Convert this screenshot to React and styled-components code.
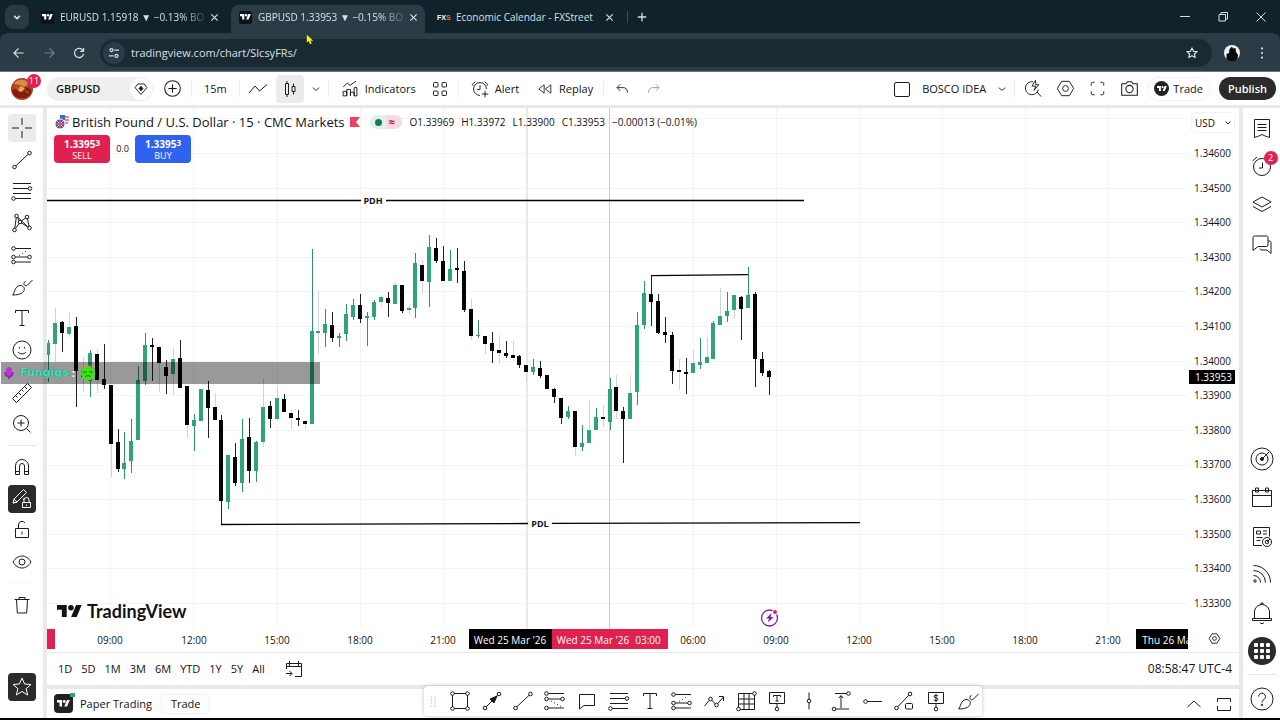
import { useState } from 'react';
import styled, { createGlobalStyle } from 'styled-components';

// [wick top, body top, body bottom, wick bottom, kind]
// g: up, k: down, gf / kf: same bodies with a pale wick
const candles = [
  [340, 343, 355, 382, 'g'], [308, 323, 344, 362, 'gf'], [321, 322, 333, 352, 'k'], [312, 327, 334, 337, 'gf'],
  [317, 326, 371, 407, 'k'], [357, 371, 377, 392, 'kf'], [350, 353, 381, 397, 'g'], [349, 354, 380, 393, 'kf'],
  [344, 379, 385, 389, 'k'], [385, 385, 444, 477, 'kf'], [429, 442, 469, 472, 'k'], [432, 463, 469, 479, 'g'],
  [419, 441, 461, 473, 'g'], [366, 380, 440, 440, 'g'], [333, 345, 381, 385, 'g'], [338, 345, 347, 381, 'k'],
  [346, 347, 363, 392, 'kf'], [360, 367, 376, 394, 'k'], [348, 359, 374, 395, 'gf'], [340, 358, 388, 388, 'k'],
  [386, 386, 425, 438, 'kf'], [414, 420, 426, 451, 'g'], [389, 389, 421, 421, 'g'], [381, 390, 408, 438, 'k'],
  [393, 407, 420, 420, 'kf'], [415, 420, 501, 525, 'k'], [455, 455, 502, 509, 'g'], [443, 457, 483, 486, 'k'],
  [419, 439, 483, 492, 'g'], [418, 437, 471, 483, 'k'], [441, 442, 471, 482, 'g'], [378, 407, 442, 447, 'gf'],
  [401, 406, 419, 428, 'k'], [387, 398, 419, 421, 'gf'], [394, 399, 412, 412, 'k'], [410, 413, 418, 429, 'kf'],
  [410, 418, 420, 426, 'k'], [420, 421, 424, 429, 'kf'], [249, 331, 424, 424, 'g'], [291, 331, 333, 354, 'gf'],
  [309, 324, 333, 347, 'g'], [312, 325, 338, 342, 'k'], [333, 336, 338, 347, 'g'], [304, 314, 334, 341, 'g'],
  [299, 305, 317, 320, 'g'], [294, 305, 319, 323, 'k'], [312, 316, 318, 346, 'g'], [300, 302, 317, 320, 'g'],
  [295, 297, 302, 307, 'gf'], [292, 298, 303, 317, 'k'], [282, 285, 304, 304, 'gf'], [285, 285, 311, 313, 'k'],
  [306, 308, 310, 315, 'gf'], [253, 263, 308, 318, 'g'], [260, 265, 281, 293, 'kf'], [235, 247, 282, 307, 'g'],
  [238, 248, 261, 263, 'k'], [246, 261, 281, 281, 'k'], [250, 269, 281, 281, 'g'], [248, 268, 270, 283, 'k'],
  [261, 271, 310, 312, 'k'], [299, 309, 336, 340, 'kf'], [320, 335, 336, 338, 'g'], [336, 336, 344, 354, 'kf'],
  [332, 343, 351, 363, 'k'], [335, 350, 353, 364, 'kf'], [341, 353, 356, 358, 'k'], [341, 355, 358, 361, 'kf'],
  [355, 356, 365, 368, 'k'], [365, 365, 372, 382, 'kf'], [359, 367, 372, 375, 'g'], [361, 368, 376, 378, 'k'],
  [375, 375, 389, 389, 'k'], [388, 389, 397, 403, 'k'], [398, 398, 418, 424, 'k'], [406, 411, 417, 419, 'g'],
  [411, 411, 447, 456, 'kf'], [425, 443, 447, 451, 'g'], [400, 430, 443, 443, 'gf'], [408, 417, 430, 430, 'g'],
  [405, 417, 419, 427, 'kf'], [378, 389, 422, 430, 'g'], [375, 387, 411, 419, 'kf'], [407, 411, 419, 463, 'k'],
  [375, 393, 419, 419, 'gf'], [312, 325, 392, 405, 'g'], [281, 293, 325, 329, 'g'], [276, 294, 302, 326, 'k'],
  [294, 301, 333, 334, 'k'], [317, 332, 335, 343, 'k'], [332, 335, 371, 384, 'k'], [359, 370, 372, 390, 'kf'],
  [358, 372, 374, 394, 'k'], [350, 363, 373, 373, 'gf'], [338, 362, 365, 369, 'g'], [337, 357, 363, 363, 'gf'],
  [321, 323, 359, 359, 'g'], [288, 316, 325, 325, 'gf'], [292, 311, 316, 322, 'g'], [295, 295, 310, 319, 'gf'],
  [296, 297, 309, 340, 'k'], [267, 295, 308, 308, 'g'], [292, 294, 359, 387, 'k'], [352, 359, 373, 376, 'k'],
  [370, 371, 377, 395, 'k'],
];

const ORIGIN_X = 47;
const ORIGIN_Y = 108;
const STEP = 6.93;

const prices = ['1.34600', '1.34500', '1.34400', '1.34300', '1.34200', '1.34100', '1.34000', '1.33900', '1.33800', '1.33700', '1.33600', '1.33500', '1.33400', '1.33300'];
const hours = [['09:00', 110], ['12:00', 194], ['15:00', 277], ['18:00', 360], ['21:00', 443], ['06:00', 693], ['09:00', 776], ['12:00', 859], ['15:00', 942], ['18:00', 1025], ['21:00', 1108]];
const gridX = [110, 193, 277, 360, 443, 693, 776, 859, 942, 1025, 1108];
const ranges = ['1D', '5D', '1M', '3M', '6M', 'YTD', '1Y', '5Y', 'All'];

const dot = (x, y, r = 1.8) => <circle cx={x} cy={y} r={r} fill="var(--bg, #fff)" />;

const shapes = {
  cross: <path d="M12 2v7M12 15v7M2 12h7M15 12h7" />,
  trend: <><path d="M4.5 19 19.5 5" />{dot(4.5, 19)}{dot(19.5, 5)}</>,
  fib: <><path d="M3 4.5h18M3 9.5h18M3 14.5h18M3 19.5h18" />{dot(20, 9.5)}{dot(3.5, 19.5)}</>,
  pattern: <><path d="M4.5 19 6.5 5 10 11 17 6l2.500 11L10 11zM6.500 5l12.500 12" />{dot(6.5, 5)}{dot(17, 6)}{dot(4.5, 19)}{dot(19.5, 17)}{dot(10, 11)}</>,
  forecast: <><path d="M4 5.500h17M4 14h15M4 19h17" /><path d="M9 12.500 18 7" strokeDasharray="1 2.500" />{dot(3.5, 5.5)}{dot(3.5, 14)}{dot(19.5, 14)}{dot(3.5, 19)}</>,
  forecast2: <><path d="M4 4.500h17M4 10h15M4 19h17" /><path d="M8 12 18 17.500" strokeDasharray="1 2.500" />{dot(3.5, 4.5)}{dot(3.5, 10)}{dot(19.5, 10)}{dot(3.5, 19)}</>,
  brush: <path d="M2.500 20C5 18 4.500 11 10 10.500c3.500-.2 5.500 3 3.500 6-2 3-7 3.500-11 3.500zM14 7.500c-.5 2 .5 4 3 3L22.500 5M14 7.500l1.500-1" />,
  text: <path d="M5.500 7V4.500h13V7M12 4.500v15M9.500 19.500h5" />,
  smile: <><circle cx="12" cy="12" r="9" /><path d="M8 14c1.500 2.500 6.500 2.500 8 0M9.500 9v1.500M14.500 9v1.500" /></>,
  ruler: <path d="m2.500 17.500 15-15 4 4-15 15zM5.500 14.500l2 2M8.500 11.500l2.500 2.500M11.500 8.500l2 2M14.500 5.500l2.500 2.500" />,
  zoom: <><circle cx="11" cy="11" r="7.500" /><path d="m16.500 16.500 4 4M11 7.500v7M7.500 11h7" /></>,
  magnet: <path d="M5.500 19.500V11a6.500 6.500 0 0 1 13 0v8.500h-4V11a2.500 2.500 0 0 0-5 0v8.500zM5.500 16.500h4M14.500 16.500h4" />,
  penLock: <><path d="m3 16 1-4 9.500-9.500 3 3L7 15zM4 12l3 3M13.500 13v-1.500M3 16l4-1" /><path d="M12.500 15.500h8v5h-8zM14 15.500V13a2.500 2.500 0 0 1 5 0v2.500M16.500 17.500v1.500" /></>,
  unlock: <path d="M5.500 10.500h13v9h-13zM8.500 10.500V7a3.500 3.500 0 0 1 6.500-2M12 13.500v3" />,
  eye: <><path d="M3 12c4.500-8 13.500-8 18 0-4.500 8-13.500 8-18 0z" /><circle cx="12" cy="12" r="3" /></>,
  trash: <path d="M4.500 6.500h15M6.500 6.500l.8 13.500h9.400l.8-13.500M9 6.500v-2h6v2" />,
  star: <path d="m12 3 2.600 6 6.400.5-4.900 4.200 1.600 6.300-5.700-3.500L6.300 20l1.600-6.300L3 9.500 9.400 9z" />,
  plus: <><circle cx="12" cy="12" r="7.500" /><path d="M12 8v8M8 12h8" /></>,
  gem: <><path d="m12 18-6.500-7.500 3-4h7l3 4z" /><path d="m12 9 2 2.500-2 2.500-2-2.500z" fill="currentColor" /></>,
  line: <path d="m3 16 6-7 4.500 5L21 7.500" />,
  candle: <path d="M7.500 6.500h3v11h-3zM9 4v2.500M9 17.500V20M14 9.500h3v5h-3zM15.500 6.500v3M15.500 14.500v3" />,
  chevron: <path d="m8.500 10.500 3.500 3 3.500-3" />,
  chevronUp: <path d="m5.500 15 6.500-6 6.500 6" />,
  indicators: <path d="M4.500 19.500v-5h4v5zM8.500 19.500v-7h4v7M12.500 19.500v-4h4v4M16.500 19.500v-9h3v9h-3M4.500 10 9 5.500 12 8l6.500-4.500" />,
  grid4: <><rect x="5.500" y="5.500" width="4.500" height="4.500" rx="1" /><rect x="14" y="5.500" width="4.500" height="4.500" rx="1" /><rect x="5.500" y="14" width="4.500" height="4.500" rx="1" /><rect x="14" y="14" width="4.500" height="4.500" rx="1" /></>,
  alert: <path d="M19 12a7 7 0 1 0-7 7M12 8v4.500H9M4.500 8.500 3.500 7 7 4M19.500 8.500l1-1.500L17 4M17.500 14v7M14 17.500h7" />,
  replay: <path d="M11 7v10l-6.500-5zM19 7v10l-6.500-5z" />,
  undo: <path d="m10 7-3.500 3.500L10 14M7 10.500h6c3 0 5 1.500 5 5.500" />,
  redo: <path d="m14 7 3.500 3.500L14 14M17 10.500h-6c-3 0-5 1.500-5 5.500" />,
  square: <rect x="4.500" y="5.500" width="15" height="14" rx="1.500" />,
  quick: <path d="M11.500 5A6.800 6.800 0 1 0 17 13M15.500 15.500l4.500 5M14 3.500 10.500 9.500h4l-2 4.500 5-6h-3z" />,
  hexagon: <><path d="M8 4.500h8l4.500 7.500-4.500 7.500H8L3.500 12z" /><circle cx="12" cy="12" r="3" /></>,
  full: <path d="M5.500 9V7a1.500 1.500 0 0 1 1.500-1.500h2M15 5.500h2A1.500 1.500 0 0 1 18.500 7v2M18.500 15v2a1.500 1.500 0 0 1-1.500 1.500h-2M9 18.500H7A1.500 1.500 0 0 1 5.500 17v-2" />,
  camera: <><path d="M4.500 7.500h4l1.500-2h4l1.500 2h4v11h-15z" /><circle cx="12" cy="12.500" r="3.500" /></>,
  list: <path d="M4.500 3.500h15v18c-2.500-1-5-1.500-7.500-3-2.500 1.500-5 2-7.500 3zM7.500 8.500h9M7.500 11.500h9M7.500 14.500h9" />,
  clock: <><circle cx="12" cy="12" r="8.500" /><path d="M12.500 7.500v5.500h-3.500M2.500 6 7 2" /></>,
  layers: <path d="m12 4 9 5-9 5-9-5zM3 13.500l9 5 9-5" />,
  chat: <path d="M3 5.500A1.500 1.500 0 0 1 4.500 4h12A1.500 1.500 0 0 1 18 5.500V13a1.500 1.500 0 0 1-1.500 1.500H8L3 18.500zM18 9h1.500A1.500 1.500 0 0 1 21 10.500v11L17 18h-5a2 2 0 0 1-2-1.500" />,
  radar: <><circle cx="12" cy="12" r="11" /><circle cx="12" cy="12" r="6" /><circle cx="12" cy="12" r="1.500" fill="currentColor" /><path d="m12 12 7-7" /></>,
  calendar: <path d="M2.500 5.500h19v16h-19zM2.500 10.500h19M5.500 3h3v4h-3zM15.500 3h3v4h-3z" />,
  news: <><path d="M12 21.500H3.500v-18h16v9M6.500 7h4v3h-4zM13 7h4M13 10h4M6.500 13.500h6M6.500 16.500h4" /><circle cx="17" cy="18" r="4.500" /><circle cx="17" cy="18" r="1.800" /><path d="m17 18 3-3" /></>,
  feed: <><circle cx="5" cy="19" r="1.200" /><path d="M3.500 13.500a7 7 0 0 1 7 7M3.500 8.500a12 12 0 0 1 12 12M3.500 3.500a17 17 0 0 1 17 17" /></>,
  bell: <path d="M4.500 17.500V11a7.500 7.500 0 0 1 15 0v6.500M2.500 17.500h19v2h-19zM10 21.500c1 1.500 3 1.500 4 0M11 3.500V2h2v1.500" />,
  help: <><circle cx="12" cy="12" r="11" /><path d="M8.500 9.500a3.500 3.500 0 1 1 5.500 3c-1.500 1-2 1.500-2 3" /><circle cx="12" cy="18" r=".8" /></>,
  goto: <path d="M4.500 12V6.500h15v13H13M4.500 9.500h15M7.500 4v5M16.500 4v5M4 16.500h6M7.500 14l2.500 2.500L7.500 19" />,
  panel: <path d="M5.500 10V6.500h13V10M5.500 14v4.500h13V14" />,
  rect: <><path d="M4.500 4.500h15v15h-15z" />{dot(4.5, 4.5)}{dot(19.5, 4.5)}{dot(4.5, 19.5)}{dot(19.5, 19.5)}</>,
  arrow: <><path d="M5 19 19 5" /><path d="m17 7-7 3 4 4z" fill="currentColor" />{dot(5, 19)}{dot(19, 5)}</>,
  comment: <path d="M4.500 5.500h15v11H9l-4.500 3.500z" />,
  poly: <><path d="m2.500 17 6-7 6 6 7-8M17 7.500h4.500V12" />{dot(8.5, 10)}{dot(14.5, 16)}</>,
  table: <><path d="M4.500 4.500h16v16h-16zM4.500 10h16M4.500 15h16M10 4.500v16M15 4.500v16" />{dot(20.5, 4.5)}{dot(4.5, 20)}</>,
  textPin: <><path d="M4.500 3.500h15v11h-15zM8.500 8V6.500h7V8M12 6.500V12M10.500 12h3M12 14.500V20" />{dot(12, 20)}</>,
  vline: <><path d="M12 3.500v17" />{dot(12, 12)}</>,
  range: <><path d="M6 4.500h14M4 20h16M12 19V7M10 9l2-2.500L14 9" />{dot(19.5, 4.5)}{dot(5, 20)}</>,
  hray: <><path d="M4 12.500h17" />{dot(4.5, 12.5)}</>,
  lineBox: <><path d="M4.500 19 18 5" /><rect x="13.500" y="14.500" width="7" height="5.500" rx="1" />{dot(4.5, 19)}{dot(18, 5)}</>,
  price: <><path d="M4.500 3.500h15v11h-15zM14 7c-1-1.200-4.500-1-4 .8.500 1.500 4 .7 4 2.500 0 1.700-3.500 1.700-4.200.4M12 5v8M12 14.500V20" />{dot(12, 20)}</>,
  back: <path d="M17 12H7M11.500 7 6.500 12l5 5" />,
  forward: <path d="M7 12h10M12.500 7l5 5-5 5" />,
  reload: <path d="M17 9.500A5.500 5.500 0 1 0 17.500 13M17.500 6v4H13.500" />,
  tune: <><circle cx="9" cy="8.500" r="1.800" /><circle cx="15" cy="15.500" r="1.800" /><path d="M12.500 8.500H18M6 15.500h5.500" /></>,
  close: <path d="m7.500 7.500 9 9M16.500 7.500l-9 9" />,
  add: <path d="M12 7v10M7 12h10" />,
  down: <path d="m8.500 10.500 3.500 3.500 3.500-3.500" />,
  minimize: <path d="M7 11.500h10" />,
  restore: <path d="M8 9.500h6.500V16H8zM10 9.500v-2h6.500V14h-2" />,
  exit: <path d="m7.500 7.500 9 9M16.500 7.500l-9 9" />,
  dots: <g fill="currentColor" stroke="none"><circle cx="12" cy="6.500" r="1.300" /><circle cx="12" cy="12" r="1.300" /><circle cx="12" cy="17.500" r="1.300" /></g>,
  fav: <path d="m12 6.500 1.600 3.700 4 .3-3 2.600.9 3.900-3.500-2.100L8.500 17l.9-3.900-3-2.600 4-.3z" />,
  drag: <g fill="#999" stroke="none">{[6, 10, 14, 18].map((y) => <g key={y}><rect x="9" y={y} width="1.300" height="1.300" /><rect x="14" y={y} width="1.300" height="1.300" /></g>)}</g>,
};

function Icon({ name, size = 24, weight = 1 }) {
  return (
    <IconSvg viewBox="0 0 24 24" width={size} height={size} strokeWidth={weight} aria-hidden="true">
      {shapes[name]}
    </IconSvg>
  );
}

function Mark({ width = 14 }) {
  return (
    <svg viewBox="0 4 36 18" width={width} height={width / 2} fill="currentColor" aria-hidden="true">
      <path d="M14 22H7V11H0V4h14v18zM28 22h-8l7.500-18h8L28 22z" />
      <circle cx="20" cy="8" r="4" />
    </svg>
  );
}

function Browser() {
  const [url, setUrl] = useState('tradingview.com/chart/SlcsyFRs/');
  return (
    <BrowserFrame>
      <TabStrip>
        <TabMenu aria-label="Search tabs"><Icon name="down" size={20} weight={2} /></TabMenu>
        <Tab>
          <Favicon><Mark width={11} /></Favicon>
          <TabTitle $fade>EURUSD 1.15918 ▼ −0.13% BO</TabTitle>
          <TabClose aria-label="Close tab"><Icon name="close" size={17} weight={1.6} /></TabClose>
        </Tab>
        <Tab $active>
          <Favicon><Mark width={11} /></Favicon>
          <TabTitle $fade>GBPUSD 1.33953 ▼ −0.15% BO</TabTitle>
          <TabClose aria-label="Close tab"><Icon name="close" size={17} weight={1.6} /></TabClose>
        </Tab>
        <Tab>
          <FxIcon>FX<em>S</em></FxIcon>
          <TabTitle>Economic Calendar - FXStreet</TabTitle>
          <TabClose aria-label="Close tab"><Icon name="close" size={17} weight={1.6} /></TabClose>
        </Tab>
        <TabLine />
        <TabClose aria-label="New tab"><Icon name="add" size={20} weight={1.6} /></TabClose>
        <WindowButtons>
          <WinButton aria-label="Minimize"><Icon name="minimize" size={24} /></WinButton>
          <WinButton aria-label="Restore"><Icon name="restore" size={24} /></WinButton>
          <WinButton aria-label="Close"><Icon name="exit" size={24} /></WinButton>
        </WindowButtons>
      </TabStrip>
      <AddressRow>
        <NavButton aria-label="Back"><Icon name="back" weight={1.3} size={22} /></NavButton>
        <NavButton aria-label="Forward" $dim><Icon name="forward" weight={1.3} size={22} /></NavButton>
        <NavButton aria-label="Reload"><Icon name="reload" weight={1.5} size={20} /></NavButton>
        <Omnibox>
          <SiteInfo aria-label="Site information"><Icon name="tune" size={20} weight={1.5} /></SiteInfo>
          <UrlInput aria-label="Address" value={url} onChange={(e) => setUrl(e.target.value)} />
          <SiteStar aria-label="Bookmark"><Icon name="fav" size={22} weight={1.3} /></SiteStar>
        </Omnibox>
        <Profile aria-label="Profile">
          <svg viewBox="0 0 16 16" width="16" height="16">
            <circle cx="8" cy="8" r="8" fill="#f2f2f2" />
            <path d="M2.500 14V9l2.500-1 .5-4L8 1.500l1 2 2.500-.5.5 4 2 3-.5 4L11 16H5z" fill="#0a0a0a" />
          </svg>
        </Profile>
        <NavButton aria-label="Menu" $narrow><Icon name="dots" size={20} /></NavButton>
      </AddressRow>
    </BrowserFrame>
  );
}

function TopBar() {
  return (
    <TopRow>
      <Avatar aria-label="Account">
        <svg viewBox="0 0 22 22" width="22" height="22">
          <circle cx="11" cy="11" r="11" fill="#a8431d" />
          <path d="M2 6c4-5 13-6 16 0l-5 3-4-2z" fill="#d98a45" />
          <path d="M1 13c3-4 7 2 9-1s5-4 9-1-2 9-8 9-8-2-10-7z" fill="#7c1f12" />
          <path d="m9 8 5 2-3 4-4-1z" fill="#f0a63c" />
          <path d="M3 9c2-1 4 1 5 3M14 12c1 2 3 3 4 2" stroke="#e46a2a" fill="none" />
        </svg>
        <Badge>11</Badge>
      </Avatar>
      <SymbolBox>
        <SymbolButton>GBPUSD</SymbolButton>
        <GemButton aria-label="Market details"><Icon name="gem" size={22} /></GemButton>
      </SymbolBox>
      <IconButton aria-label="Compare" $w={30}><Icon name="plus" size={25} /></IconButton>
      <Split />
      <TextButton $pad={8}>15m</TextButton>
      <Split />
      <IconButton aria-label="Line"><Icon name="line" /></IconButton>
      <IconButton aria-label="Candles" $on><Icon name="candle" /></IconButton>
      <IconButton aria-label="Chart types" $w={16}><Icon name="chevron" size={22} /></IconButton>
      <Split />
      <TextButton><Icon name="indicators" size={22} />Indicators</TextButton>
      <IconButton aria-label="Templates"><Icon name="grid4" /></IconButton>
      <Split />
      <TextButton><Icon name="alert" size={22} />Alert</TextButton>
      <TextButton><Icon name="replay" size={20} />Replay</TextButton>
      <Split />
      <IconButton aria-label="Undo"><Icon name="undo" size={22} /></IconButton>
      <IconButton aria-label="Redo" $dim><Icon name="redo" size={22} /></IconButton>
      <RightGroup>
        <IconButton aria-label="Layout" $w={24}><Icon name="square" /></IconButton>
        <TextButton $pad={4}>BOSCO IDEA</TextButton>
        <IconButton aria-label="Layouts" $w={16}><Icon name="chevron" size={22} /></IconButton>
        <Split />
        <IconButton aria-label="Quick search"><Icon name="quick" size={23} /></IconButton>
        <IconButton aria-label="Settings"><Icon name="hexagon" size={23} /></IconButton>
        <IconButton aria-label="Fullscreen"><Icon name="full" size={23} /></IconButton>
        <IconButton aria-label="Snapshot"><Icon name="camera" size={25} /></IconButton>
        <TradeButton><TradeMark><Mark width={10} /></TradeMark>Trade</TradeButton>
        <PublishButton>Publish</PublishButton>
      </RightGroup>
    </TopRow>
  );
}

function ToolGroup({ names, height, active }) {
  return (
    <Group $h={height}>
      {names.map((name) => (
        <IconButton key={name} aria-label={name} $on={name === 'cross'} $dark={name === active}>
          <Icon name={name} />
        </IconButton>
      ))}
    </Group>
  );
}

function LeftBar() {
  return (
    <Side as="nav" $w={43}>
      <ToolGroup names={['cross', 'trend', 'fib', 'pattern', 'forecast', 'brush', 'text', 'smile']} height={250} />
      <SideLine $clear />
      <ToolGroup names={['ruler', 'zoom']} height={59} />
      <SideLine />
      <ToolGroup names={['magnet', 'penLock', 'unlock', 'eye']} height={123} active="penLock" />
      <SideLine $clear />
      <ToolGroup names={['trash']} height={28} />
      <Spacer />
      <ToolGroup names={['star']} height={28} active="star" />
    </Side>
  );
}

function RightBar() {
  return (
    <Side as="aside" $w={37} $bottom={5}>
      <Group $h={144}>
        <IconButton aria-label="Watchlist"><Icon name="list" /></IconButton>
        <IconButton aria-label="Alerts"><Icon name="clock" /><Badge>2</Badge></IconButton>
        <IconButton aria-label="Layers"><Icon name="layers" /></IconButton>
        <IconButton aria-label="Chat"><Icon name="chat" /></IconButton>
      </Group>
      <Spacer />
      <Group $h={220}>
        <IconButton aria-label="Screener"><Icon name="radar" /></IconButton>
        <IconButton aria-label="Calendar"><Icon name="calendar" /></IconButton>
        <IconButton aria-label="News"><Icon name="news" /></IconButton>
        <IconButton aria-label="Feed"><Icon name="feed" /></IconButton>
        <IconButton aria-label="Notifications"><Icon name="bell" /></IconButton>
        <IconButton aria-label="Products" $dark $round>
          <svg viewBox="0 0 24 24" width="24" height="24" fill="#fff">
            {[4, 10, 16].map((y) => [4, 10, 16].map((x) => <rect key={`${x}-${y}`} x={x} y={y} width="4" height="4" rx="1" />))}
          </svg>
        </IconButton>
      </Group>
      <SideLine $wide />
      <IconButton aria-label="Help"><Icon name="help" /></IconButton>
    </Side>
  );
}

function Plot() {
  return (
    <PlotSvg role="img" aria-label="GBPUSD 15 minute candles">
      <g transform={`translate(${-ORIGIN_X} ${-ORIGIN_Y})`} shapeRendering="crispEdges">
        {gridX.map((x) => <rect key={x} x={x} y="108" width="1" height="520" fill="#f4f4f4" />)}
        {[-1, ...prices.keys()].map((i) => (
          <rect key={i} x="47" y={Math.round(153 + i * 34.62)} width="1140" height="1" fill="#f4f4f4" />
        ))}
        <rect x="526" y="108" width="2" height="521" fill="#e9e9e9" />
        <rect x="609" y="108" width="1" height="521" fill="#dfc6c9" />
        {candles.map(([wt, bt, bb, wb, kind], i) => {
          const x = Math.round(48.2 + i * STEP);
          const body = kind[0] === 'g' ? '#2fa37c' : '#050505';
          const wick = kind[1] ? '#d3d3d3' : kind === 'g' ? '#2f8f6e' : '#222';
          return (
            <g key={i}>
              <rect x={x} y={wt} width="1" height={Math.max(wb - wt, 1)} fill={wick} />
              <rect x={x - 2} y={bt} width="4" height={Math.max(bb - bt, 1)} fill={body} />
            </g>
          );
        })}
      </g>
      <g transform={`translate(${-ORIGIN_X} ${-ORIGIN_Y})`}>
        <path d="M47 200.500H361M386 200.500H804M221 524.500 528 523.500M552 523.400 860 522.600M651 275.700 748 274.700" stroke="#000" strokeWidth="1.300" />
        <ChartLabel x="373" y="204" $bold>PDH</ChartLabel>
        <ChartLabel x="540" y="527" $bold>PDL</ChartLabel>
        <circle cx="769.500" cy="618" r="8" fill="#fff" stroke="#7b1fa2" strokeWidth="1.300" />
        <path d="m771.500 613-5.500 5.500h3l-1 4 5.500-5.500h-3z" fill="#7b1fa2" />
        <circle cx="775" cy="612" r="2.500" fill="#e0214f" stroke="#fff" />

        <rect x="47" y="629" width="8" height="20" fill="#e0214f" />
        <rect x="469" y="629" width="83" height="20" />
        <rect x="552" y="629" width="116" height="20" fill="#e0214f" />
        <rect x="1136" y="629" width="83" height="20" />
        {hours.map(([label, x]) => <ChartLabel key={x} x={x} y="644">{label}</ChartLabel>)}
        <ChartLabel x="510" y="644" $light>Wed 25 Mar '26</ChartLabel>
        <ChartLabel x="593" y="644" $light>Wed 25 Mar '26</ChartLabel>
        <ChartLabel x="648" y="644" $light>03:00</ChartLabel>
        <ChartLabel x="1177" y="644" $light>Thu 26 Mar '26</ChartLabel>
      </g>
    </PlotSvg>
  );
}

function Legend() {
  return (
    <LegendBox>
      <LegendRow>
        <svg width="14" height="14" viewBox="0 0 14 14" aria-hidden="true">
          <circle cx="9" cy="5" r="5" fill="#f3d9df" />
          <path d="M5 0h5v5H5z" fill="#3c6fc4" />
          <path d="M10 2h4M10 5h4M8 8h5" stroke="#d6334c" />
          <circle cx="5" cy="9" r="5" fill="#35508f" stroke="#fff" />
          <path d="M5 4.500v9M.5 9h9M2 6l6 6M8 6l-6 6" stroke="#f1c5cd" />
          <path d="M5 5v8M1 9h8" stroke="#d6334c" />
        </svg>
        <Title>British Pound / U.S. Dollar · 15 · CMC Markets</Title>
        <svg width="10" height="10" viewBox="0 0 10 10" aria-hidden="true"><path d="M0 0h10L6 5l4 5H0z" fill="#f0405f" /></svg>
        <Status>
          <StatusDot />
          <StatusWave>≈</StatusWave>
        </Status>
        <Ohlc>
          <span>O1.33969</span><span>H1.33972</span><span>L1.33900</span><span>C1.33953</span><span>−0.00013 (−0.01%)</span>
        </Ohlc>
      </LegendRow>
      <OrderRow>
        <OrderButton $color="#e0214f"><b>1.3395<sup>3</sup></b><span>SELL</span></OrderButton>
        <Spread>0.0</Spread>
        <OrderButton $color="#2f62f0"><b>1.3395<sup>3</sup></b><span>BUY</span></OrderButton>
      </OrderRow>
    </LegendBox>
  );
}

function PriceAxis() {
  return (
    <AxisColumn>
      <Currency aria-label="Currency" defaultValue="USD">
        <option>USD</option>
        <option>GBP</option>
      </Currency>
      <PriceList>
        {prices.map((p) => <li key={p}>{p}</li>)}
      </PriceList>
      <LastPrice>1.33953</LastPrice>
      <AxisSettings aria-label="Axis settings"><Icon name="hexagon" size={15} weight={1.4} /></AxisSettings>
    </AxisColumn>
  );
}

const favorites = ['rect', 'arrow', 'trend', 'forecast2', 'comment', 'fib', 'text', 'forecast', 'poly', 'table', 'textPin', 'vline', 'range', 'hray', 'lineBox', 'price', 'brush'];

export default function App() {
  return (
    <Page>
      <GlobalStyle />
      <Browser />
      <TopBar />
      <Workspace>
        <LeftBar />
        <Center>
          <ChartCard>
            <ChartArea>
              <PlotWrap>
                <Plot />
                <Legend />
                <Watermark><Mark width={25} />TradingView</Watermark>
              </PlotWrap>
              <PriceAxis />
            </ChartArea>
            <RangeRow>
              {ranges.map((r) => <RangeButton key={r}>{r}</RangeButton>)}
              <IconButton aria-label="Go to date" $w={48}><Icon name="goto" /></IconButton>
              <Clock>08:58:47 UTC-4</Clock>
            </RangeRow>
          </ChartCard>
          <Footer>
            <PaperButton><PaperMark><Mark width={13} /></PaperMark>Paper Trading</PaperButton>
            <FooterButton>Trade</FooterButton>
            <FooterRight>
              <IconButton aria-label="Open panel"><Icon name="chevronUp" /></IconButton>
              <IconButton aria-label="Maximize panel"><Icon name="panel" /></IconButton>
            </FooterRight>
          </Footer>
        </Center>
        <RightBar />
      </Workspace>
      <Favorites>
        <Icon name="drag" size={18} />
        {favorites.map((name) => <IconButton key={name} aria-label={name}><Icon name={name} /></IconButton>)}
      </Favorites>
      <ChatStrip>
        <svg width="10" height="14" viewBox="0 0 10 14" aria-hidden="true">
          <rect x="2" y="1" width="6" height="9" rx="3" fill="#c030d8" />
          <path d="M1 6c0 6 8 6 8 0M5 10v3" stroke="#8e1ca8" fill="none" strokeWidth="1.500" />
        </svg>
        <ChatName>Fungigs</ChatName>
        <ChatColon>:</ChatColon>
        <svg width="16" height="16" viewBox="0 0 16 16" aria-hidden="true">
          <circle cx="8" cy="8.500" r="7" fill="#3be312" />
          <path d="M1 2.500c4-2 10-2 14 0" stroke="#e0a020" fill="none" />
          <path d="M3 7h4M9 7h4M5 11.500c2-1 4-1 6 0" stroke="#167a08" fill="none" />
        </svg>
      </ChatStrip>
      <Cursor viewBox="0 0 10 12" width="8" height="11" aria-hidden="true">
        <path d="M1 0v10l2.500-2L5 12l2-1-1.500-3.500H9z" fill="#fff200" />
      </Cursor>
    </Page>
  );
}

const GlobalStyle = createGlobalStyle`
  * { box-sizing: border-box; }
  body { margin: 0; background: #e9e9e9; color: #131313; font: 11px/16px 'Open Sans', 'Noto Sans', sans-serif; }
  button, input, select { font: inherit; color: inherit; border: 0; background: none; padding: 0; margin: 0; outline: 0; }
  button { display: flex; align-items: center; justify-content: center; white-space: nowrap; flex-shrink: 0; }
`;

const Page = styled.div`
  position: relative;
  display: flex;
  flex-direction: column;
  min-height: 100vh;
  border-bottom: 2px solid #000;
  overflow: hidden;
`;
const IconSvg = styled.svg`
  flex-shrink: 0;
  fill: none;
  stroke: currentColor;
  stroke-linejoin: round;
`;

const BrowserFrame = styled.header`
  background: #10232b;
  color: #d5e0e6;
  border-bottom: 1px solid #6d777c;
`;
const TabStrip = styled.div`
  display: flex;
  align-items: center;
  gap: 4px;
  height: 33px;
  padding-left: 5px;
`;
const TabMenu = styled.button`
  width: 24px;
  height: 24px;
  border-radius: 8px;
  background: #2a3942;
`;
const Tab = styled.div`
  display: flex;
  align-items: center;
  align-self: flex-end;
  width: 194px;
  height: 28px;
  padding: 0 4px 4px 8px;
  border-radius: 8px 8px 0 0;
  background: ${(p) => (p.$active ? '#2c3c46' : 'transparent')};
`;
const Favicon = styled.span`
  display: flex;
  align-items: center;
  justify-content: center;
  flex-shrink: 0;
  width: 13px;
  height: 13px;
  background: #0b1519;
  color: #fff;
  border-radius: 2px;
`;
const FxIcon = styled.span`
  flex-shrink: 0;
  width: 13px;
  font: bold 7px/13px 'Liberation Sans', sans-serif;
  color: #fff;
  em { font-style: normal; color: #e8694a; }
`;
const TabTitle = styled.span`
  flex: 1;
  margin-left: 6px;
  font-size: 10px;
  white-space: nowrap;
  mask-image: ${(p) => (p.$fade ? 'linear-gradient(90deg, #000 84%, rgba(0, 0, 0, 0.2))' : 'none')};
`;
const TabClose = styled.button`
  width: 20px;
  height: 20px;
`;
const TabLine = styled.i`
  width: 1px;
  height: 12px;
  background: #3d4d57;
`;
const WindowButtons = styled.div`
  display: flex;
  margin-left: auto;
`;
const WinButton = styled.button`
  width: 38px;
  height: 32px;
`;
const AddressRow = styled.div`
  display: flex;
  align-items: center;
  height: 38px;
  padding: 1px 8px 0 4px;
  background: #2c3c46;
  border-radius: 8px 8px 0 0;
`;
const NavButton = styled.button`
  width: ${(p) => (p.$narrow ? 20 : 30)}px;
  height: 28px;
  opacity: ${(p) => (p.$dim ? 0.4 : 1)};
`;
const Omnibox = styled.div`
  display: flex;
  align-items: center;
  flex: 1;
  height: 28px;
  margin-left: 6px;
  padding: 0 8px 0 3px;
  border-radius: 14px;
  background: #1a2a33;
`;
const SiteInfo = styled.button`
  width: 22px;
  height: 22px;
  border-radius: 50%;
  background: #2c3c46;
`;
const UrlInput = styled.input`
  flex: 1;
  min-width: 0;
  margin-left: 6px;
`;
const SiteStar = styled.button`
  width: 24px;
  height: 24px;
`;
const Profile = styled.button`
  width: 24px;
  height: 24px;
  margin: 0 8px;
`;

const TopRow = styled.div`
  display: flex;
  align-items: center;
  gap: 4px;
  height: 33px;
  margin-bottom: 3px;
  padding: 0 4px 0 8px;
  background: #fff;
`;
const Avatar = styled.button`
  position: relative;
  width: 35px;
  height: 28px;
  justify-content: flex-start;
  padding-left: 3px;
`;
const Badge = styled.span`
  position: absolute;
  top: -1px;
  right: 2px;
  width: 14px;
  height: 14px;
  border-radius: 7px;
  background: #e0214f;
  color: #fff;
  font-size: 9px;
  line-height: 14px;
  text-align: center;
`;
const SymbolBox = styled.div`
  display: flex;
  align-items: center;
  justify-content: space-between;
  width: 106px;
  height: 24px;
  padding-left: 9px;
  border-radius: 12px;
  background: #efefef;
`;
const SymbolButton = styled.button`
  font-weight: 600;
`;
const GemButton = styled.button`
  width: 22px;
  height: 22px;
  margin-right: 1px;
  border-radius: 50%;
  background: #fff;
`;
const IconButton = styled.button`
  position: relative;
  width: ${(p) => p.$w || 28}px;
  height: 28px;
  border-radius: ${(p) => (p.$round ? 14 : 4)}px;
  background: ${(p) => (p.$dark ? '#2b2b2b' : p.$on ? '#ebebeb' : 'transparent')};
  color: ${(p) => (p.$dark ? '#fff' : '#1c1c1c')};
  opacity: ${(p) => (p.$dim ? 0.45 : 1)};
  --bg: ${(p) => (p.$dark ? '#2b2b2b' : '#fff')};
  ${Badge} { right: -2px; top: -2px; }
`;
const TextButton = styled.button`
  gap: 4px;
  height: 28px;
  padding: 0 ${(p) => p.$pad || 6}px;
`;
const Split = styled.i`
  width: 1px;
  height: 16px;
  background: #ececec;
`;
const RightGroup = styled.div`
  display: flex;
  align-items: center;
  gap: 4px;
  margin-left: auto;
`;
const TradeButton = styled.button`
  gap: 4px;
  height: 24px;
  margin-right: 4px;
  padding: 0 7px 0 6px;
  border: 1px solid #f0f0f0;
  border-radius: 12px;
`;
const TradeMark = styled.span`
  display: flex;
  align-items: center;
  justify-content: center;
  width: 15px;
  height: 15px;
  border-radius: 50%;
  background: #222;
  color: #fff;
`;
const PublishButton = styled.button`
  height: 23px;
  padding: 0 9px;
  border-radius: 12px;
  background: #2b2b2b;
  color: #fff;
  font-weight: 600;
`;

const Workspace = styled.div`
  display: flex;
  flex: 1;
  gap: 4px;
`;
const Side = styled.div`
  display: flex;
  flex-direction: column;
  align-items: center;
  flex-shrink: 0;
  width: ${(p) => p.$w}px;
  padding: 6px 0 ${(p) => p.$bottom || 17}px;
  background: #fff;
`;
const Group = styled.div`
  display: flex;
  flex-direction: column;
  justify-content: space-between;
  height: ${(p) => p.$h}px;
`;
const SideLine = styled.i`
  width: 28px;
  height: 1px;
  margin: ${(p) => (p.$wide ? '9px 0 10px' : '7px 0')};
  background: ${(p) => (p.$clear ? '#fafafa' : '#e6e6e6')};
`;
const Spacer = styled.div`
  flex: 1;
`;
const Center = styled.main`
  display: flex;
  flex-direction: column;
  flex: 1;
  gap: 4px;
  min-width: 0;
`;
const ChartCard = styled.section`
  display: flex;
  flex-direction: column;
  flex: 1;
  background: #fff;
`;
const ChartArea = styled.div`
  display: flex;
  flex: 1;
  min-height: 544px;
`;
const PlotWrap = styled.div`
  position: relative;
  flex: 1;
  min-width: 0;
`;
const PlotSvg = styled.svg`
  display: block;
  width: 100%;
  height: 544px;
`;
const ChartLabel = styled.text`
  font-size: ${(p) => (p.$bold ? 9 : 10)}px;
  font-weight: ${(p) => (p.$bold ? 700 : p.$light ? 500 : 400)};
  text-anchor: middle;
  fill: ${(p) => (p.$light ? '#fff' : '#131313')};
`;
const LegendBox = styled.div`
  position: absolute;
  top: 5px;
  left: 8px;
`;
const LegendRow = styled.div`
  display: flex;
  align-items: center;
  height: 18px;
`;
const Title = styled.h1`
  margin: 0 5px 0 3px;
  font-size: 13px;
  font-weight: 400;
  white-space: nowrap;
`;
const Status = styled.span`
  display: flex;
  align-items: center;
  width: 32px;
  height: 14px;
  margin: 0 8px 0 10px;
  border-radius: 7px;
  background: linear-gradient(90deg, #e0f1ec 50%, #fbd9e4 50%);
`;
const StatusDot = styled.i`
  width: 7px;
  height: 7px;
  margin-left: 5px;
  border-radius: 50%;
  background: #14795a;
`;
const StatusWave = styled.span`
  margin-left: 7px;
  color: #b0164a;
  font-weight: 700;
`;
const Ohlc = styled.span`
  display: flex;
  gap: 7px;
  font-size: 10px;
  white-space: nowrap;
`;
const OrderRow = styled.div`
  display: flex;
  align-items: center;
  margin: 4px 0 0 -1px;
`;
const OrderButton = styled.button`
  flex-direction: column;
  width: 56px;
  height: 28px;
  border-radius: 4px;
  background: ${(p) => p.$color};
  color: #fff;
  font-size: 10px;
  line-height: 12px;
  b { font-weight: 700; }
  sup { font-size: 8px; line-height: 8px; vertical-align: 2px; }
  span { font-size: 9px; line-height: 11px; }
`;
const Spread = styled.span`
  width: 25px;
  font-size: 9px;
  text-align: center;
`;
const Watermark = styled.div`
  position: absolute;
  left: 10px;
  top: 491px;
  display: flex;
  align-items: center;
  gap: 5px;
  font: 700 18px/24px Lato, sans-serif;
`;
const AxisColumn = styled.div`
  position: relative;
  display: flex;
  flex-direction: column;
  align-items: flex-end;
  width: 51px;
  padding: 4px 4px 4px 0;
`;
const Currency = styled.select`
  appearance: none;
  width: 44px;
  height: 21px;
  padding-left: 3px;
  border: 1px solid #f3f3f3;
  border-radius: 4px;
  font-size: 10px;
  background: url("data:image/svg+xml,%3Csvg xmlns='http://www.w3.org/2000/svg' width='6' height='4'%3E%3Cpath d='M.5.5 3 3 5.500.5' fill='none' stroke='%23222'/%3E%3C/svg%3E") no-repeat right 3px center;
`;
const PriceList = styled.ul`
  display: flex;
  flex-direction: column;
  justify-content: space-between;
  height: 466px;
  margin: 12px 0 0;
  padding: 0 4px 0 0;
  list-style: none;
  font-size: 10px;
`;
const LastPrice = styled.output`
  position: absolute;
  top: 262px;
  left: 1px;
  width: 46px;
  height: 14px;
  padding-left: 6px;
  background: #000;
  color: #fff;
  font-size: 10px;
  line-height: 14px;
`;
const AxisSettings = styled.button`
  width: 28px;
  height: 20px;
  margin: auto 7px 0 0;
`;
const RangeRow = styled.div`
  display: flex;
  align-items: center;
  gap: 1px;
  height: 33px;
  padding: 0 7px;
  border-top: 1px solid #e9e9e9;
`;
const RangeButton = styled.button`
  height: 24px;
  padding: 0 4px;
`;
const Clock = styled.time`
  margin-left: auto;
  font-size: 12px;
`;
const Footer = styled.footer`
  display: flex;
  align-items: center;
  height: 29px;
  padding: 0 1px 0 7px;
  background: #fff;
`;
const PaperButton = styled.button`
  gap: 7px;
`;
const PaperMark = styled.span`
  position: relative;
  display: flex;
  align-items: center;
  justify-content: center;
  width: 19px;
  height: 19px;
  border-radius: 4px;
  background: #222;
  color: #fff;
  &::after {
    content: '';
    position: absolute;
    top: -1px;
    right: -2px;
    width: 5px;
    height: 4px;
    background: #2fa37c;
  }
`;
const FooterButton = styled.button`
  height: 20px;
  margin-left: 9px;
  padding: 0 9px;
  border: 1px solid #f0f0f0;
  border-radius: 4px;
`;
const FooterRight = styled.div`
  display: flex;
  gap: 2px;
  margin-left: auto;
`;
const Favorites = styled.div`
  position: absolute;
  bottom: 2px;
  left: 424px;
  display: flex;
  align-items: center;
  justify-content: space-between;
  width: 558px;
  height: 30px;
  border-radius: 4px;
  background: #fff;
  box-shadow: 0 0 4px rgba(0, 0, 0, 0.25);
`;
const ChatStrip = styled.div`
  position: absolute;
  top: 362px;
  left: 1px;
  display: flex;
  align-items: center;
  width: 319px;
  height: 22px;
  padding-left: 3px;
  background: rgba(0, 0, 0, 0.4);
`;
const ChatName = styled.b`
  margin-left: 6px;
  font: bold 11px/16px 'DejaVu Sans', sans-serif;
  color: #3fe0b8;
  text-shadow: 0 0 1px #0d6b55;
`;
const ChatColon = styled.b`
  margin: 0 5px 0 3px;
  color: #fff;
`;
const Cursor = styled.svg`
  position: absolute;
  top: 34px;
  left: 306px;
`;
